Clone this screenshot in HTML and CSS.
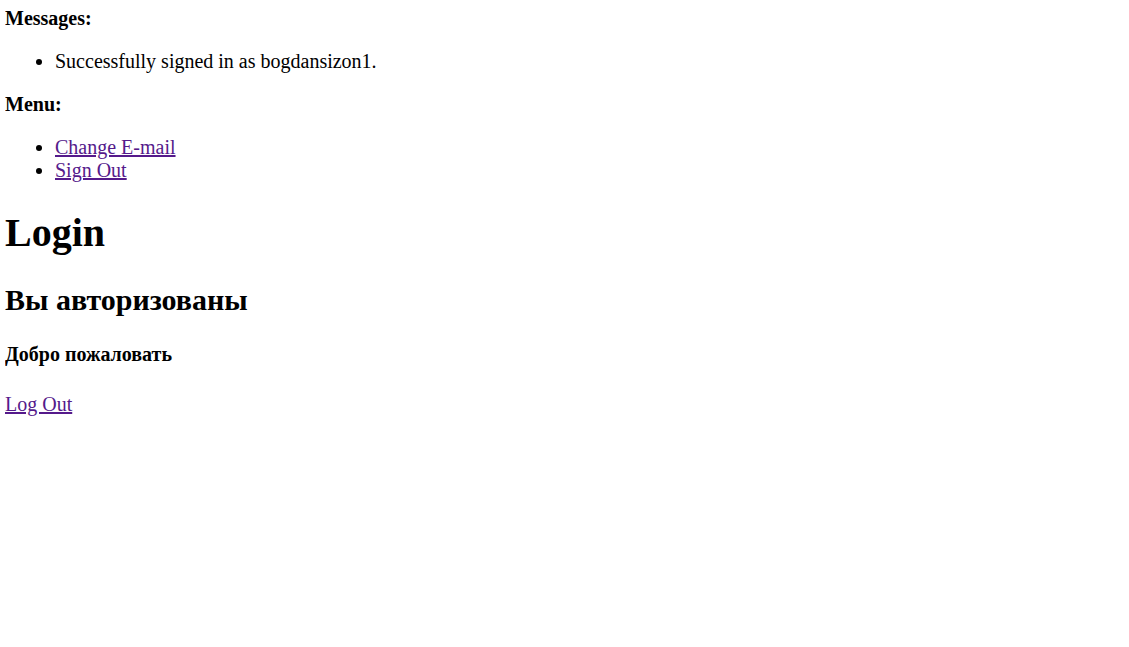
FILE: index.html
```html
<!DOCTYPE html>
<html lang="ru">
<head>
<meta charset="utf-8">
<title>Login</title>
<link rel="stylesheet" href="styles.css">
</head>
<body class="page">
<div class="block">
  <strong class="label">Messages:</strong>
  <ul class="list">
    <li class="item">Successfully signed in as bogdansizon1.</li>
  </ul>
</div>
<div class="block">
  <strong class="label">Menu:</strong>
  <ul class="list">
    <li class="item"><a class="link" href="#">Change E-mail</a></li>
    <li class="item"><a class="link" href="#">Sign Out</a></li>
  </ul>
</div>
<h1 class="title">Login</h1>
<h2 class="subtitle">Вы авторизованы</h2>
<h4 class="welcome">Добро пожаловать</h4>
<p class="para"><a class="link" href="#">Log Out</a></p>
</body>
</html>
```
FILE: styles.css
```css
html {
  font-size: 20px;
}
.page {
  margin: 7px 5px;
  font-family: "Liberation Serif", "Noto Sans CJK SC", serif;
  font-size: 20px;
  color: #000;
  background: #fff;
}
.label {
  font-weight: bold;
}
.list {
  margin: 20px 0;
  padding-left: 50px;
  list-style: disc;
}
.item {
  line-height: normal;
}
.link {
  color: #551a8b;
  text-decoration: underline;
}
.title {
  font-size: 40px;
  margin: 26.8px 0;
  font-weight: bold;
}
.subtitle {
  font-size: 30px;
  margin: 24.9px 0;
  font-weight: bold;
}
.welcome {
  font-size: 20px;
  margin: 26.6px 0;
  font-weight: bold;
}
.para {
  margin: 20px 0;
}
```
